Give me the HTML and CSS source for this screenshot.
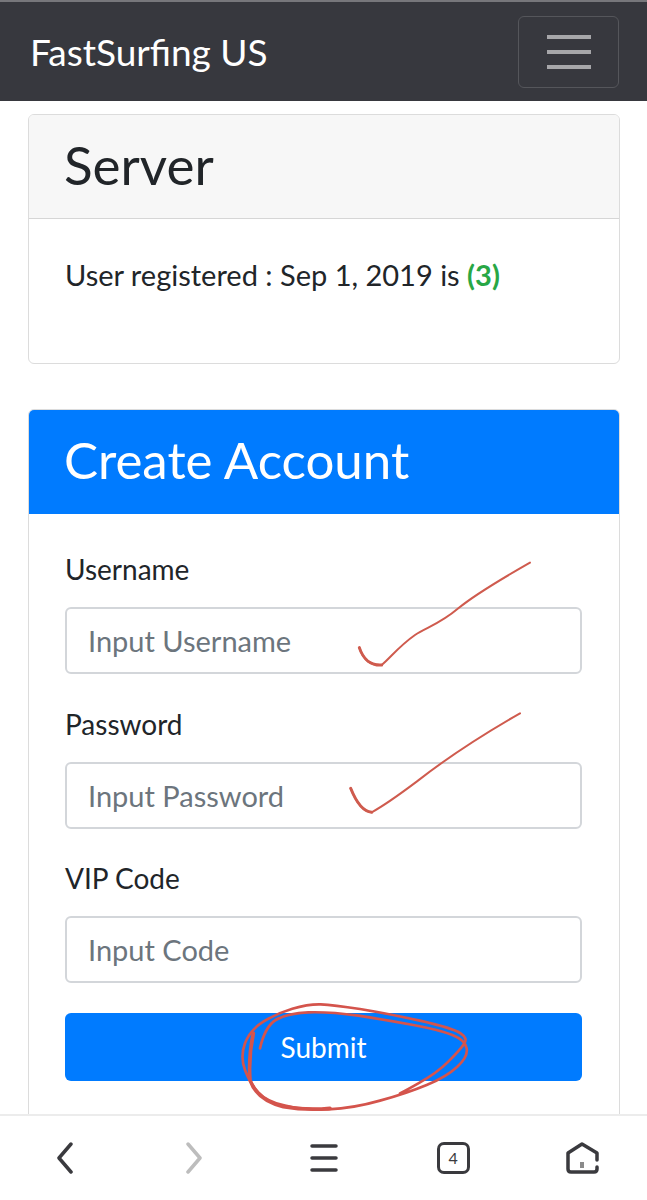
FILE: index.html
```html
<!DOCTYPE html>
<html lang="en">
<head>
    <meta charset="UTF-8">
    <title>FastSurfing US</title>
    <link rel="stylesheet" href="styles.css">
</head>
<body>

<nav class="navbar">
    <a class="brand">FastSurfing US</a>
    <button class="toggler">
        <span></span>
        <span></span>
        <span></span>
    </button>
</nav>

<main class="content">
    <section class="card">
        <h2 class="card-header">Server</h2>
        <div class="card-body server-body">
            <p>User registered : Sep 1, 2019 is <b class="count">(3)</b></p>
        </div>
    </section>

    <section class="card account">
        <h2 class="card-header blue">Create Account</h2>
        <form class="card-body">
            <label for="user">Username</label>
            <input id="user" type="text" placeholder="Input Username">
            <label for="pass">Password</label>
            <input id="pass" type="text" placeholder="Input Password">
            <label for="code">VIP Code</label>
            <input id="code" type="text" placeholder="Input Code">
            <button class="submit" type="button">Submit</button>
        </form>
    </section>

    <!-- pen marks drawn over the form -->
    <svg class="marks" width="647" height="1013" viewBox="0 0 647 1013" fill="none">
        <g transform="translate(340 449) scale(.3333)" stroke="#cf5b4e" stroke-width="6" stroke-linecap="round" stroke-linejoin="round">
            <path d="M58 293C70 330 95 347 125 345C150 325 175 290 225 255C260 232 300 222 355 175C400 138 470 95 570 38"/>
            <path d="M32 715C50 760 70 785 95 787C130 768 170 740 230 695C300 640 400 570 540 490"/>
            <path d="M58 293C70 330 95 347 125 345" stroke-width="9"/>
            <path d="M32 715C50 760 70 785 95 787" stroke-width="9"/>
        </g>
        <g transform="translate(220 889) scale(.3333)" stroke="#d4544c" stroke-width="8" stroke-linecap="round" stroke-linejoin="round">
            <path d="M120 175Q135 110 167 90Q200 70 265 67Q330 65 415 77Q500 90 580 105Q660 120 697 135Q735 150 740 175Q745 200 712 230Q680 260 620 285Q560 310 480 332Q400 355 325 358Q250 360 195 347Q140 335 115 307Q90 280 75 240Q60 200 75 160Q90 120 130 95Q170 70 217 56Q265 42 302 43Q340 45 420 57Q500 70 600 92Q700 115 722 130Q745 145 732 162Q720 180 685 215Q650 250 595 280Q560 300 540 310"/>
            <path d="M100 130Q85 200 90 270Q110 330 190 350Q260 362 330 355" stroke-width="11"/>
        </g>
    </svg>
</main>

<footer class="toolbar">
    <svg width="18" height="32" viewBox="0 0 18 32" fill="none" stroke="#3a3a3e" stroke-width="3.5" stroke-linecap="round" stroke-linejoin="round"><path d="M15 2L3 16L15 30"/></svg>
    <svg width="18" height="32" viewBox="0 0 18 32" fill="none" stroke="#bdbdbd" stroke-width="3.5" stroke-linecap="round" stroke-linejoin="round"><path d="M3 2L15 16L3 30"/></svg>
    <svg width="28" height="28" viewBox="0 0 28 28" fill="none" stroke="#3a3a3e" stroke-width="3.5" stroke-linecap="round"><path d="M2 2H26M2 14H26M2 26H26"/></svg>
    <div class="tabs">4</div>
    <svg width="33" height="32" viewBox="0 0 33 32" fill="none" stroke="#3a3a3e" stroke-width="3.5" stroke-linecap="round" stroke-linejoin="round"><path d="M31 25V27Q31 30 28 30H5Q2 30 2 27V11L16 2L31 11V18"/><path d="M16 20V26" stroke="#8a8a8a" stroke-width="4" stroke-linecap="butt"/></svg>
</footer>

</body>
</html>
```

FILE: styles.css
```css
*{
    margin: 0;
    padding: 0;
    box-sizing: border-box;
}

body{
    display: flex;
    flex-direction: column;
    height: 1200px;
    overflow: hidden;
    background-color: #fff;
    color: #212529;
    font-family: Lato, "Noto Sans", sans-serif;
    font-size: 28px;
}

.navbar{
    display: flex;
    align-items: center;
    justify-content: space-between;
    height: 101px;
    padding: 0 28px 0 30px;
    border-top: 2px solid #77777b;
    background-color: #37383e;
}

.brand{
    color: #fff;
    font-size: 37px;
}

.toggler{
    display: flex;
    flex-direction: column;
    align-items: center;
    justify-content: center;
    gap: 11px;
    width: 101px;
    height: 72px;
    border: 1px solid #55565b;
    border-radius: 6px;
    background: none;
}

.toggler span{
    width: 44px;
    height: 4px;
    background-color: #a6a6a9;
}

.content{
    position: relative;
    flex: 1;
    overflow: hidden;
    padding: 13px 27px 0 28px;
}

.card{
    border: 1px solid #dcdcdc;
    border-radius: 6px;
    overflow: hidden;
}

.account{
    margin-top: 45px;
    height: 760px;
}

.card-header{
    height: 104px;
    padding-left: 35px;
    border-bottom: 1px solid #d6d6d6;
    background-color: #f7f7f7;
    font-size: 53px;
    font-weight: 400;
    line-height: 100px;
}

.blue{
    border-bottom-color: #007bff;
    background-color: #007bff;
    color: #fff;
    font-size: 51px;
}

.card-body{
    display: flex;
    flex-direction: column;
    padding: 36px 37px 36px 36px;
}

.server-body{
    height: 144px;
    padding-top: 38px;
    font-size: 29px;
}

.count{
    color: #28a745;
}

label{
    height: 38px;
    margin-bottom: 17px;
    line-height: 38px;
}

input{
    height: 67px;
    margin: 2px 0 30.5px;
    padding: 0 21px;
    border: 2px solid #d3d6da;
    border-radius: 6px;
    font: inherit;
    font-size: 29px;
}

input::placeholder{
    color: #6c757d;
}

.submit{
    height: 68px;
    margin-top: -.5px;
    border: none;
    border-radius: 6px;
    background-color: #007bff;
    color: #fff;
    font: inherit;
}

.marks{
    position: absolute;
    top: 0;
    left: 0;
}

.toolbar{
    display: grid;
    grid-template-columns: repeat(5, 129.5px);
    justify-items: center;
    align-items: center;
    height: 86px;
    border-top: 2px solid #ececec;
    background-color: #fff;
}

.tabs{
    width: 33px;
    height: 32px;
    border: 3.5px solid #3a3a3e;
    border-radius: 7px;
    color: #3a3a3e;
    font-size: 16px;
    line-height: 25px;
    text-align: center;
}
```
